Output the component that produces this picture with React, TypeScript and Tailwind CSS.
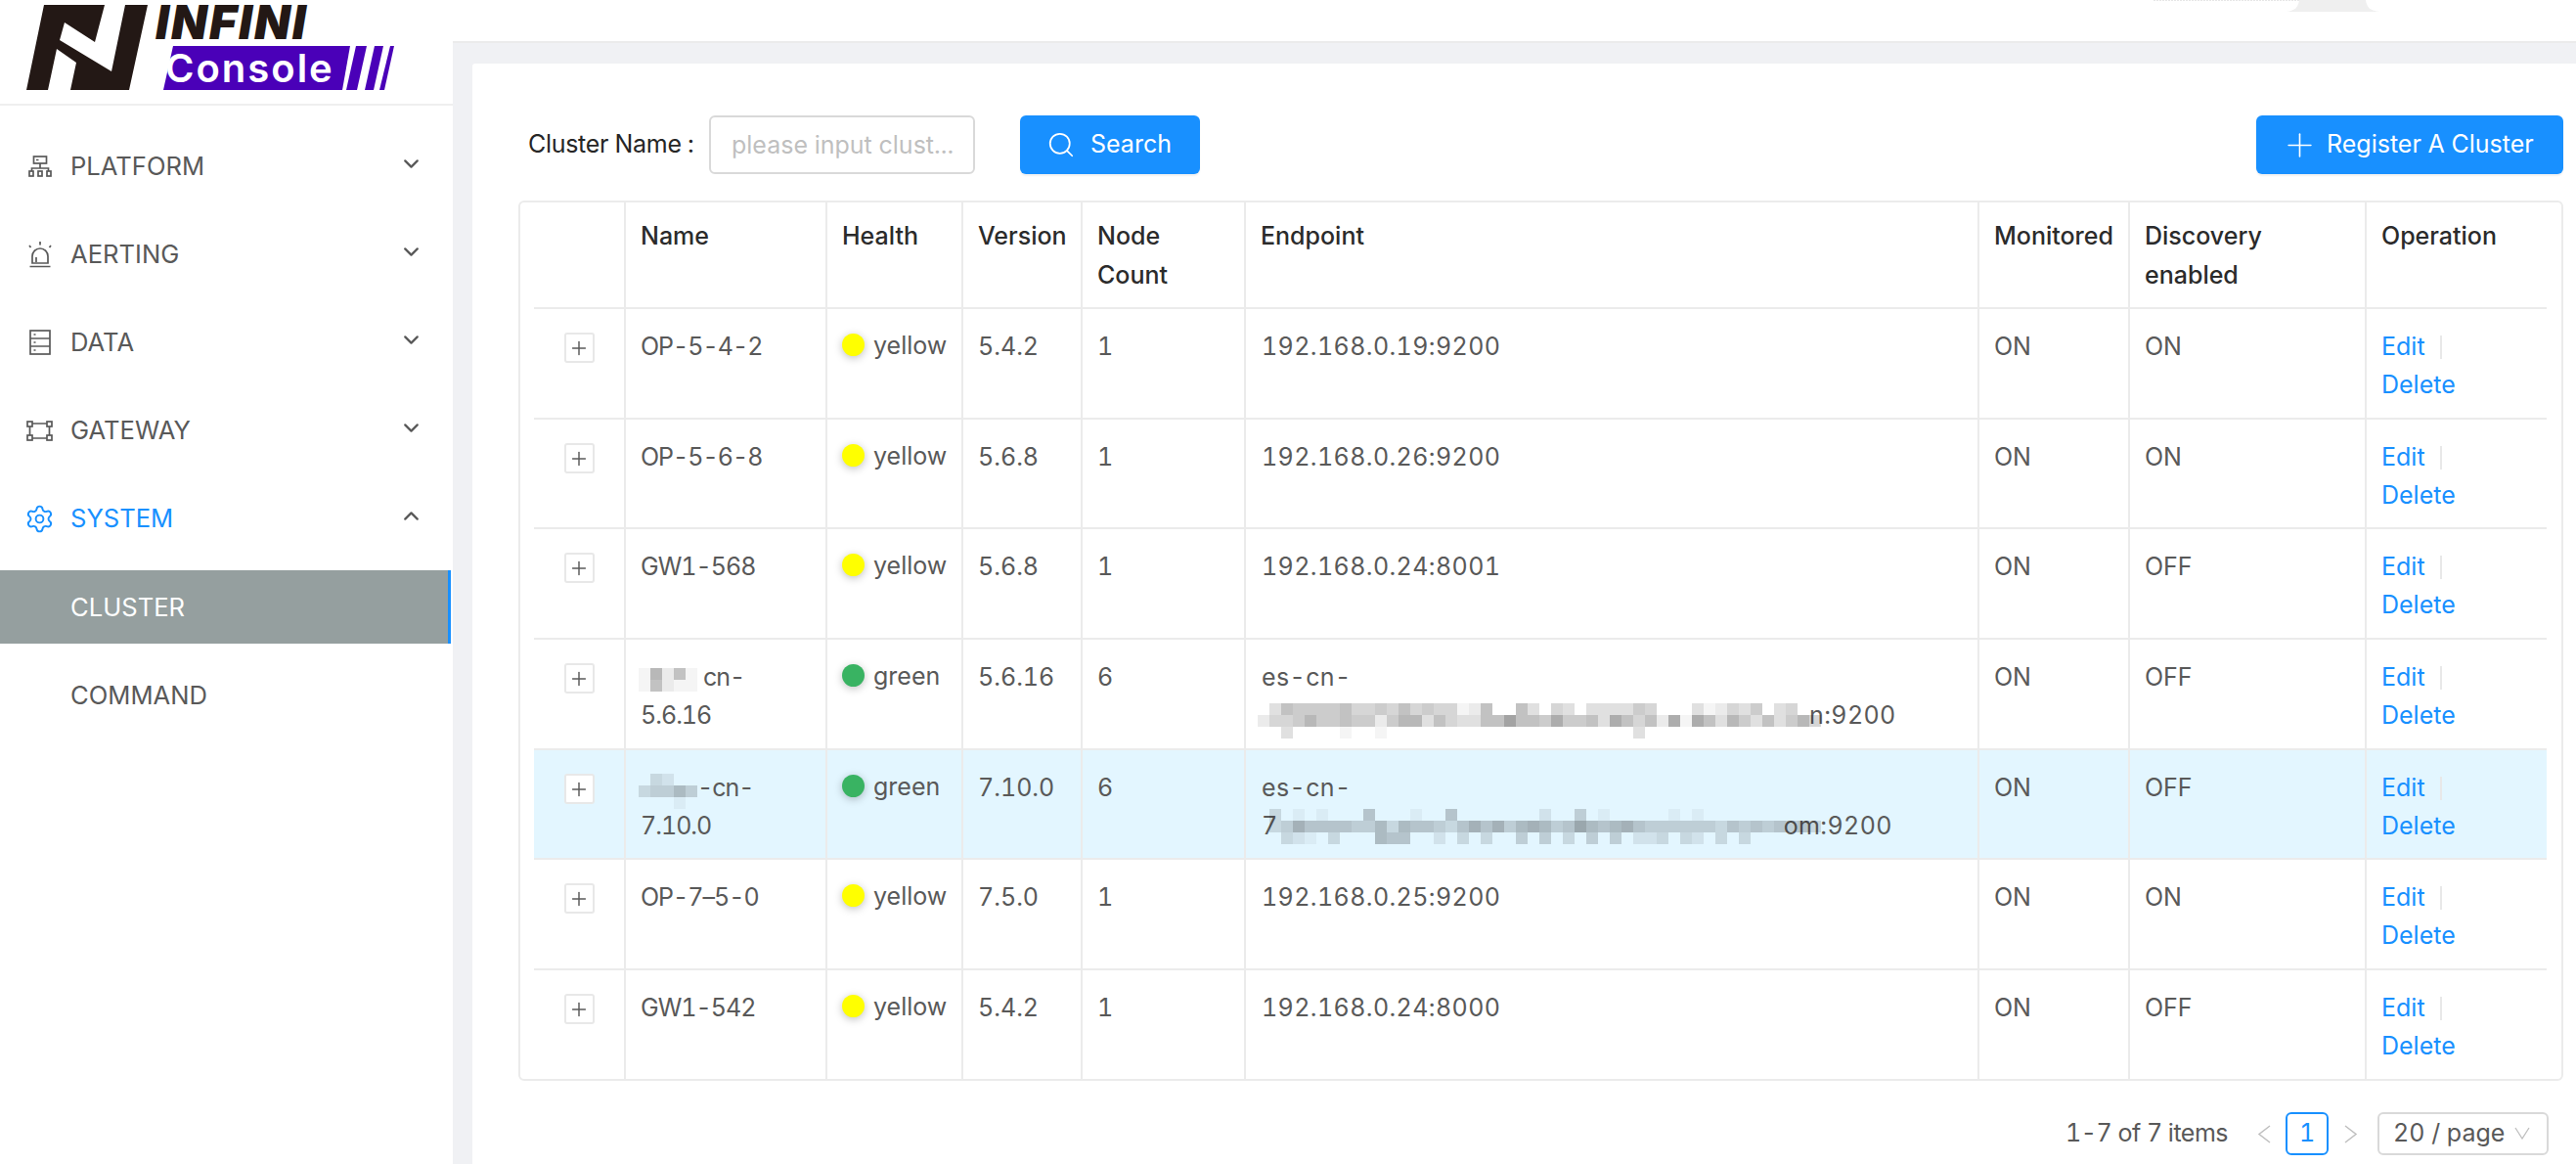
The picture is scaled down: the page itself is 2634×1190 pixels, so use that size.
import React from "react";
import { ChevronDown, ChevronUp, Search, Plus, Settings } from "lucide-react";

interface ClusterRow {
  name: string;
  health: "yellow" | "green";
  version: string;
  nodes: number;
  endpoint?: string;
  monitored: string;
  discovery: string;
  height: string;
}

const clusters: ClusterRow[] = [
  { name: "OP-5-4-2", health: "yellow", version: "5.4.2", nodes: 1, endpoint: "192.168.0.19:9200", monitored: "ON", discovery: "ON", height: "h-[113px]" },
  { name: "OP-5-6-8", health: "yellow", version: "5.6.8", nodes: 1, endpoint: "192.168.0.26:9200", monitored: "ON", discovery: "ON", height: "h-[112px]" },
  { name: "GW1-568", health: "yellow", version: "5.6.8", nodes: 1, endpoint: "192.168.0.24:8001", monitored: "ON", discovery: "OFF", height: "h-[113px]" },
  { name: "5.6.16", health: "green", version: "5.6.16", nodes: 6, monitored: "ON", discovery: "OFF", height: "h-[113px]" },
  { name: "7.10.0", health: "green", version: "7.10.0", nodes: 6, monitored: "ON", discovery: "OFF", height: "h-[112px]" },
  { name: "OP-7–5-0", health: "yellow", version: "7.5.0", nodes: 1, endpoint: "192.168.0.25:9200", monitored: "ON", discovery: "ON", height: "h-[113px]" },
  { name: "GW1-542", health: "yellow", version: "5.4.2", nodes: 1, endpoint: "192.168.0.24:8000", monitored: "ON", discovery: "OFF", height: "h-[111px]" },
];

// blurred-out parts of the screenshot, each digit is how dark a 12px cell is
const Mosaic = ({ rows, className }: { rows: string[]; className: string }) => {
  const width = Math.max(...rows.map((r) => r.length)) * 12;
  return (
    <svg className={className} width={width} height={rows.length * 12} shapeRendering="crispEdges">
      {rows.map((row, y) =>
        row.split("").map((c, x) =>
          c === "." ? null : (
            <rect key={`${x}-${y}`} x={x * 12} y={y * 12} width={12} height={12} fill="#000" fillOpacity={Number(c) * 0.04} />
          )
        )
      )}
    </svg>
  );
};

const PlatformIcon = () => (
  <svg width="24" height="22" viewBox="0 0 24 22" fill="none" stroke="#595959" strokeWidth="1.7">
    <rect x="5.5" y="1" width="13" height="7" />
    <path d="M8 4.500h2.500M12 8v5M3.500 16v-3h17v3" />
    <rect x="1" y="16" width="4" height="5" />
    <rect x="10" y="16" width="4" height="5" />
    <rect x="19" y="16" width="4" height="5" />
  </svg>
);

const AlertIcon = () => (
  <svg width="24" height="27" viewBox="0 0 24 27" fill="none" stroke="#595959" strokeWidth="1.7">
    <path d="M4 22V15a8 8 0 0 1 16 0v7z" />
    <path d="M1.500 25.500h21M12 0v3.500M1 4l1.500 2M23 4l-1.500 2M8 21v-5" />
  </svg>
);

const DataIcon = () => (
  <svg width="22" height="26" viewBox="0 0 22 26" fill="none" stroke="#595959" strokeWidth="1.7">
    <rect x="1" y="1" width="20" height="24" />
    <path d="M1 9h20M1 17h20M4.500 5h2M4.500 13h2M4.500 21h2" />
  </svg>
);

const GatewayIcon = () => (
  <svg width="27" height="21" viewBox="0 0 27 21" fill="none" stroke="#595959" strokeWidth="1.7">
    <rect x="1" y="1" width="5" height="5" />
    <rect x="21" y="1" width="5" height="5" />
    <rect x="1" y="15" width="5" height="5" />
    <rect x="21" y="15" width="5" height="5" />
    <path d="M6 3h15M6 18h15M3.500 6v9M23.500 6v9" />
  </svg>
);

const Logo = () => (
  <div className="relative h-[108px] border-b-[2px] border-[#efefef] overflow-hidden">
    <svg className="absolute left-0 top-0" width="420" height="100">
      <polygon fill="#231815" points="45,5 107,5 97,43 66,23 61,41 114,73 128,5 151,5 132,92 72,92 78,64 58,50 49,92 27,92" />
      <polygon fill="#4a00b8" points="177,47 358,47 350,92 167,92" />
      <polygon fill="#4a00b8" points="364,47 375,47 365,92 354,92" />
      <polygon fill="#4a00b8" points="383,47 392,47 382,92 373,92" />
      <polygon fill="#4a00b8" points="399,47 403,47 393,92 388,92" />
    </svg>
    <span className="absolute left-[159px] top-[5px] text-[48px] leading-[36px] font-black italic text-[#231815] tracking-[2px]">INFINI</span>
    <span className="absolute left-[169px] top-[47px] text-[40px] leading-[46px] font-semibold text-white tracking-[2px]">Console</span>
  </div>
);

const MenuItem = ({ icon, label, open, active }: { icon: React.ReactNode; label: string; open?: boolean; active?: boolean }) => (
  <div className={`relative flex items-center h-[90px] pl-[72px] text-[25.6px] ${active ? "text-[#1890ff]" : "text-[#595959]"}`}>
    <span className="absolute left-[27px] top-0 bottom-0 w-[27px] flex items-center justify-center">{icon}</span>
    {label}
    <span className="absolute left-[408px] top-[30px]">
      {open ? <ChevronUp size={25} strokeWidth={2.2} color="#595959" /> : <ChevronDown size={25} strokeWidth={2.2} color="#595959" />}
    </span>
  </div>
);

const Sidebar = () => (
  <aside className="w-[463px] h-[1190px] shrink-0 bg-white">
    <Logo />
    <div className="pt-[17px]">
      <MenuItem icon={<PlatformIcon />} label="PLATFORM" />
      <MenuItem icon={<AlertIcon />} label="AERTING" />
      <MenuItem icon={<DataIcon />} label="DATA" />
      <MenuItem icon={<GatewayIcon />} label="GATEWAY" />
      <MenuItem icon={<span className="block w-[31px] h-[31px] shrink-0"><Settings size={31} strokeWidth={1.500} color="#1890ff" /></span>} label="SYSTEM" open active />
      <div className="mt-[8px] w-[461px] h-[75px] flex items-center pl-[72px] text-[25.6px] text-white bg-[#959f9f] border-r-[3px] border-[#1890ff]">
        CLUSTER
      </div>
      <div className="mt-[15px] h-[75px] flex items-center pl-[72px] text-[25.6px] text-[#595959]">COMMAND</div>
    </div>
  </aside>
);

const ClusterTable = () => (
  <div className="mt-[27px] w-[2091px] rounded-[6px] border-[2px] border-[#ebebeb] px-[14px]">
    <table className="table-fixed w-[2058px] border-separate border-spacing-0">
      <colgroup>
        <col className="w-[94px]" />
        <col className="w-[206px]" />
        <col className="w-[139px]" />
        <col className="w-[122px]" />
        <col className="w-[167px]" />
        <col className="w-[750px]" />
        <col className="w-[154px]" />
        <col className="w-[242px]" />
        <col className="w-[184px]" />
      </colgroup>
      <thead>
        <tr className="h-[109px]">
          {[
            "",
            "Name",
            "Health",
            "Version",
            <>
              Node
              <br />
              Count
            </>,
            "Endpoint",
            "Monitored",
            <>
              Discovery
              <br />
              enabled
            </>,
            "Operation",
          ].map((label, i) => (
            <th
              key={i}
              className={`align-top text-left font-medium text-[#2b2b2b] pl-[15px] pr-[4px] pt-[15px] border-b-[2px] border-[#ebebeb] ${i < 8 ? "border-r-[2px]" : ""}`}
            >
              {label}
            </th>
          ))}
        </tr>
      </thead>
      <tbody>
        {clusters.map((c, i) => {
          const last = i === clusters.length - 1;
          const cell = `relative align-top pt-[19px] pl-[15px] pr-[4px] leading-[39px] text-[#595959] border-[#ebebeb] border-r-[2px] ${last ? "" : "border-b-[2px]"}`;
          return (
            <tr key={i} className={`${c.height} ${i === 4 ? "bg-[#e3f6ff]" : ""}`}>
              <td className={`${cell} !pl-0 !pr-0 !pt-[24px]`}>
                <span className="flex mx-auto items-center justify-center w-[31px] h-[31px] rounded-[3px] border-[2px] border-[#e8e8e8] bg-white">
                  <Plus size={22} strokeWidth={1.600} />
                </span>
              </td>
              <td className={`${cell} tracking-[-1px]`}>
                {i === 3 && (
                  <>
                    <div className="ml-[64px]">cn-</div>
                    <Mosaic className="absolute left-[13px] top-[29px]" rows={["17261", "16211"]} />
                  </>
                )}
                {i === 4 && (
                  <>
                    <div className="ml-[58px]">-cn-</div>
                    <Mosaic className="absolute left-[13px] top-[24px]" rows={[".32..", "34464", "...1."]} />
                  </>
                )}
                {c.name}
              </td>
              <td className={cell}>
                <div className="flex items-start">
                  <span
                    className={`mt-[6px] w-[23px] h-[23px] shrink-0 rounded-full shadow-[0_2px_8px_rgba(0,0,0,0.25)] ${c.health === "yellow" ? "bg-[#ffff00]" : "bg-[#39b362]"}`}
                  />
                  <span className="ml-[9px] -mt-[1px]">{c.health}</span>
                </div>
              </td>
              <td className={cell}>{c.version}</td>
              <td className={cell}>{c.nodes}</td>
              <td className={`${cell} !pl-[16px] tracking-[0.400px]`}>
                {c.endpoint}
                {i === 3 && (
                  <>
                    <div>es-cn-</div>
                    <div className="pl-[560px]">n:9200</div>
                    <Mosaic
                      className="absolute left-[12px] top-[65px]"
                      rows={[
                        ".3655556445464544126..63.43.333354...312435.34",
                        "244575565525773643366966585563864628186375363574",
                        "..3....1..1.....................3...............",
                      ]}
                    />
                  </>
                )}
                {i === 4 && (
                  <>
                    <div>es-cn-</div>
                    <div>
                      7<span className="pl-[517px]">om:9200</span>
                    </div>
                    <Mosaic
                      className="absolute left-[12px] top-[60px]"
                      rows={[
                        ".3.1.1...5...1..5.......2..4.1.....1.1..........",
                        ".34755554463655435757467645865675444444354545453",
                        "..321.3...655..2.3.3..4.4.3.4.4.223.32.3.3......",
                      ]}
                    />
                  </>
                )}
              </td>
              <td className={cell}>{c.monitored}</td>
              <td className={cell}>{c.discovery}</td>
              <td className={`${cell} !border-r-0 !text-[#1890ff]`}>
                <div className="flex items-center">
                  Edit
                  <span className="ml-[15px] w-[2px] h-[24px] bg-[#e8e8e8]" />
                </div>
                <div>Delete</div>
              </td>
            </tr>
          );
        })}
      </tbody>
    </table>
  </div>
);

const Pagination = () => (
  <div className="mt-[32px] mr-[15px] flex items-center justify-end text-[#595959]">
    <span className="tracking-[-0.500px]">1-7 of 7 items</span>
    <svg className="ml-[30px]" width="14" height="19" viewBox="0 0 14 19" fill="none" stroke="#bfbfbf" strokeWidth="1.500">
      <path d="M13 1 2 9.500 13 18" />
    </svg>
    <span className="ml-[15px] w-[44px] h-[44px] flex items-center justify-center rounded-[6px] border-[2px] border-[#1890ff] text-[#1890ff]">1</span>
    <svg className="ml-[16px]" width="14" height="19" viewBox="0 0 14 19" fill="none" stroke="#bfbfbf" strokeWidth="1.500">
      <path d="m1 1 11 8.500L1 18" />
    </svg>
    <div className="ml-[20px] w-[175px] h-[44px] flex items-center pl-[14px] rounded-[6px] border-[2px] border-[#d9d9d9] relative">
      20 / page
      <svg className="absolute left-[138px] top-[13px]" width="16" height="13" viewBox="0 0 16 13" fill="none" stroke="#bfbfbf" strokeWidth="1.300">
        <path d="m1 1 7 11 7-11" />
      </svg>
    </div>
  </div>
);

export default function App() {
  return (
    <div className="flex w-[2634px] h-[1190px] overflow-hidden bg-[#f0f1f4] text-[25px] leading-[39.500px] tabular-nums [font-family:Inter,sans-serif]">
      <Sidebar />
      <main className="flex-1 min-w-0">
        <div className="relative h-[44px] bg-white border-b-[2px] border-[#ebebeb]">
          <svg className="absolute left-[1739px] top-0" width="240" height="13">
            <path d="M0 .5h183" stroke="#e6e6e6" strokeDasharray="2 1" />
            <path d="M136 12c8 -1 12 -4 13 -12h68c1 8 5 11 14 12z" fill="#efefef" />
          </svg>
        </div>
        <div className="ml-[20px] mt-[21px] h-[1125px] bg-white pl-[47px] pr-[13px] pt-[53px] rounded-tl-[3px]">
          <div className="flex items-center h-[60px]">
            <label className="ml-[10px] w-[185px] shrink-0 text-[#262626] tracking-[-0.300px]">Cluster Name :</label>
            <input
              placeholder="please input clust..."
              className="w-[272px] h-[60px] rounded-[6px] border-[2px] border-[#d9d9d9] px-[21px] outline-none placeholder:text-[#bfbfbf]"
            />
            <button className="ml-[46px] w-[184px] h-[60px] flex items-center pl-[27px] gap-[15px] rounded-[6px] bg-[#1890ff] text-white shadow-[0_2px_2px_rgba(0,0,0,0.06)]">
              <Search size={30} strokeWidth={1.400} />
              Search
            </button>
            <button className="ml-auto w-[314px] h-[60px] flex items-center pl-[25px] gap-[8px] rounded-[6px] bg-[#1890ff] text-white shadow-[0_2px_2px_rgba(0,0,0,0.06)]">
              <Plus size={39} strokeWidth={1} />
              Register A Cluster
            </button>
          </div>
          <ClusterTable />
          <Pagination />
        </div>
      </main>
    </div>
  );
}
